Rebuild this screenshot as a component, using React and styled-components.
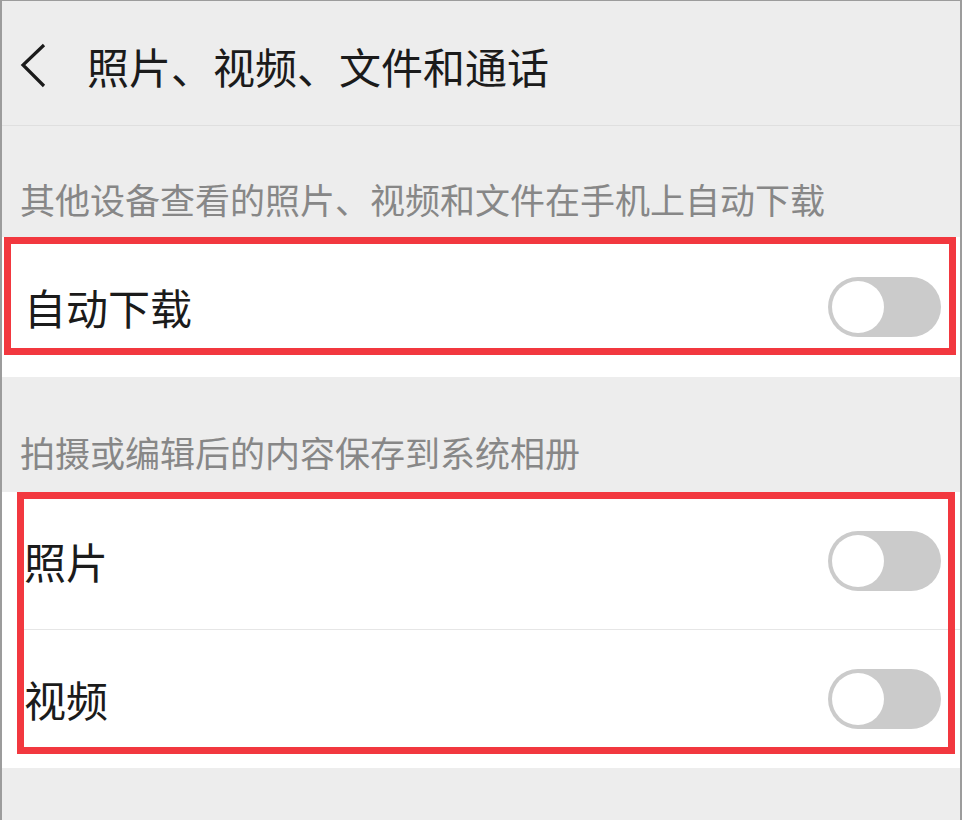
import styled, { createGlobalStyle } from "styled-components";

const GlobalStyle = createGlobalStyle`
  body {
    margin: 0;
    background: #ededed;
    font-family: "Noto Sans CJK SC", "Noto Sans", sans-serif;
  }
`;

const Screen = styled.div`
  width: 962px;
  height: 820px;
  box-sizing: border-box;
  border: 2px solid #9c9c9c;
  border-top-width: 1px;
  border-bottom: none;
  background: #ededed;
  overflow: hidden;
`;

const Header = styled.div`
  height: 125px;
  box-sizing: border-box;
  padding-top: 6px;
  display: flex;
  align-items: center;
  border-bottom: 1px solid #dfdfdf;
`;

const BackButton = styled.div`
  width: 85px;
  display: flex;
  align-items: center;
  padding-left: 18px;
  box-sizing: border-box;
`;

const Title = styled.h1`
  margin: 0;
  font-size: 42px;
  line-height: 42px;
  font-weight: 400;
  color: #1b1b1b;
`;

const SectionLabel = styled.div`
  height: ${(p) => p.height}px;
  box-sizing: border-box;
  display: flex;
  align-items: flex-end;
  padding: 0 0 ${(p) => p.bottom}px 18px;
  font-size: 35px;
  line-height: 35px;
  color: #878787;
`;

const Group = styled.div`
  position: relative;
  background: #fff;
`;

const Row = styled.div`
  height: ${(p) => p.height}px;
  display: flex;
  align-items: center;
  justify-content: space-between;
  padding: 0 19px 0 22px;
`;

const RowText = styled.span`
  font-size: 42px;
  line-height: 42px;
  color: #1b1b1b;
`;

const Divider = styled.div`
  height: 1px;
  margin-left: 22px;
  background: #e6e6e6;
`;

const Track = styled.div`
  position: relative;
  width: 113px;
  height: 60px;
  border-radius: 30px;
  background: #cbcbcb;
  flex-shrink: 0;
`;

const Knob = styled.div`
  position: absolute;
  top: 4px;
  left: 4px;
  width: 52px;
  height: 52px;
  border-radius: 50%;
  background: #fff;
`;

const Highlight = styled.div`
  position: absolute;
  top: 0;
  left: ${(p) => p.left}px;
  width: ${(p) => p.width}px;
  height: ${(p) => p.height}px;
  box-sizing: border-box;
  border: 7px solid #f2383f;
  pointer-events: none;
`;

const Toggle = () => (
  <Track>
    <Knob />
  </Track>
);

const BackIcon = () => (
  <svg width="28" height="46" viewBox="0 0 28 46">
    <polyline
      points="24,2 3,22 24,43"
      fill="none"
      stroke="#1b1b1b"
      strokeWidth="3.2"
    />
  </svg>
);

export default function App() {
  return (
    <>
      <GlobalStyle />
      <Screen>
        <Header>
          <BackButton>
            <BackIcon />
          </BackButton>
          <Title>照片、视频、文件和通话</Title>
        </Header>

        <SectionLabel height={111} bottom={21}>
          其他设备查看的照片、视频和文件在手机上自动下载
        </SectionLabel>
        <Group>
          <Row height={140}>
            <RowText>自动下载</RowText>
            <Toggle />
          </Row>
          <Highlight left={2} width={952} height={118} />
        </Group>

        <SectionLabel height={115} bottom={23}>
          拍摄或编辑后的内容保存到系统相册
        </SectionLabel>
        <Group>
          <Row height={137}>
            <RowText>照片</RowText>
            <Toggle />
          </Row>
          <Divider />
          <Row height={138}>
            <RowText>视频</RowText>
            <Toggle />
          </Row>
          <Highlight left={15} width={938} height={262} />
        </Group>
      </Screen>
    </>
  );
}
